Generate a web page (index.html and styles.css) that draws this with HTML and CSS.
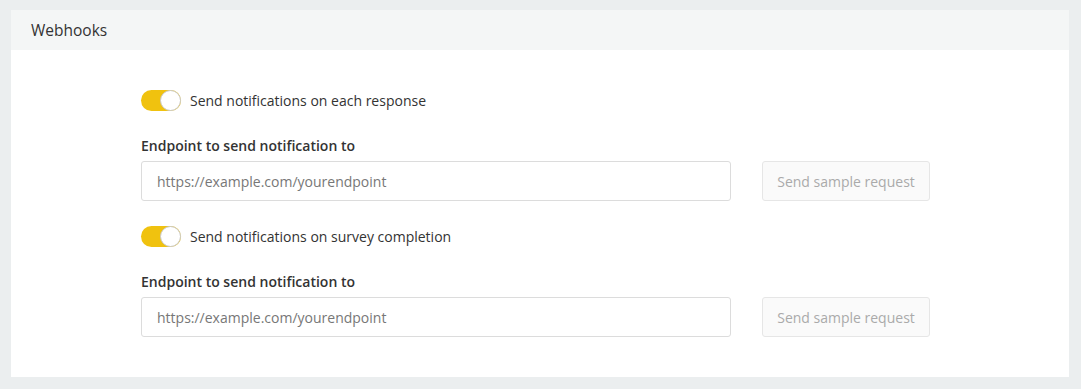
FILE: index.html
```html
<!DOCTYPE html>
<html>
	<head>
		<meta charset="utf-8">
		<title>Webhooks</title>
		<link rel="stylesheet" href="styles.css">
	</head>
	<body>
		<div class="card">
			<div class="card_head">Webhooks</div>
			<div class="card_body">
				<label class="switch_row">
					<span class="switch"><span class="knob"></span></span>
					<span>Send notifications on each response</span>
				</label>
				<div class="field">
					<p class="field_label">Endpoint to send notification to</p>
					<div class="field_row">
						<input type="text" placeholder="https://example.com/yourendpoint">
						<button>Send sample request</button>
					</div>
				</div>
				<label class="switch_row">
					<span class="switch"><span class="knob"></span></span>
					<span>Send notifications on survey completion</span>
				</label>
				<div class="field">
					<p class="field_label">Endpoint to send notification to</p>
					<div class="field_row">
						<input type="text" placeholder="https://example.com/yourendpoint">
						<button>Send sample request</button>
					</div>
				</div>
			</div>
		</div>
	</body>
</html>
```
FILE: styles.css
```css
*{ margin: 0; padding: 0; box-sizing: border-box; }
html{ background-color: #ebeeef; }
body{ font-family: "Open Sans", "Liberation Sans", sans-serif; font-size: 14px; color: #333; padding: 10px 12px 12px 11px; }
.card{ background-color: #fff; }
.card_head{ height: 40px; line-height: 40px; padding-left: 20px; font-size: 15.5px; color: #333; background-color: #f4f6f6; }
.card_body{ padding: 40px 130px 40px; }
.switch_row{ display: flex; align-items: center; gap: 9px; height: 20px; cursor: pointer; }
.switch{ position: relative; width: 40px; height: 21px; border-radius: 11px; background-color: #f0c20f; }
.switch .knob{ position: absolute; right: 0; top: 0; width: 21px; height: 21px; border-radius: 50%; background-color: #fff; border: 1px solid #c9c9c9; }
.field{ margin: 26px 0 25px; }
.field:last-child{ margin-bottom: 0; }
.field_label{ font-weight: 600; line-height: 20px; margin-bottom: 5px; }
.field_row{ display: flex; gap: 31px; }
.field_row input{ width: 590px; height: 40px; border: 1px solid #dcdcdc; border-radius: 3px; padding: 0 15px; font: inherit; color: #333; }
.field_row input::placeholder{ color: #777; }
.field_row button{ width: 168px; height: 40px; border: 1px solid #e6e6e6; border-radius: 3px; background-color: #fafafa; color: #aaa; font: inherit; }
```
